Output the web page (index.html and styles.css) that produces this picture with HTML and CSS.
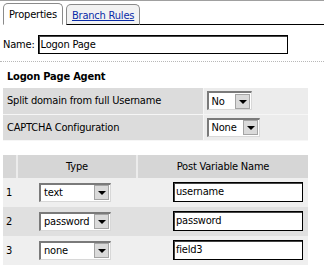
FILE: index.html
```html
<!DOCTYPE html>
<html lang="en">
<head>
    <meta charset="UTF-8">
    <title>Logon Page Properties</title>
    <link rel="stylesheet" href="styles.css">
</head>
<body>

    <div class="tab-bar">
        <div class="tab active">Properties</div>
        <div class="tab"><a href="#">Branch Rules</a></div>
        <div class="tab-fill"></div>
    </div>

    <div class="name-row">
        <label>Name:</label>
        <div class="text-box wide">Logon Page</div>
    </div>

    <div class="section-title">Logon Page Agent</div>

    <table class="agent-props">
        <tr>
            <td class="prop-label">Split domain from full Username</td>
            <td class="prop-value">
                <div class="combo short"><span class="combo-text">No</span><span class="combo-btn"></span></div>
            </td>
        </tr>
        <tr>
            <td class="prop-label">CAPTCHA Configuration</td>
            <td class="prop-value">
                <div class="combo mid"><span class="combo-text">None</span><span class="combo-btn"></span></div>
            </td>
        </tr>
    </table>

    <table class="fields">
        <tr class="head">
            <th class="num"></th>
            <th>Type</th>
            <th>Post Variable Name</th>
        </tr>
        <tr class="light">
            <td class="num">1</td>
            <td class="type-cell">
                <div class="combo long"><span class="combo-text">text</span><span class="combo-btn"></span></div>
            </td>
            <td class="var-cell"><div class="text-box var">username</div></td>
        </tr>
        <tr class="dark">
            <td class="num">2</td>
            <td class="type-cell">
                <div class="combo long"><span class="combo-text">password</span><span class="combo-btn"></span></div>
            </td>
            <td class="var-cell"><div class="text-box var">password</div></td>
        </tr>
        <tr class="light">
            <td class="num">3</td>
            <td class="type-cell">
                <div class="combo long"><span class="combo-text">none</span><span class="combo-btn"></span></div>
            </td>
            <td class="var-cell"><div class="text-box var">field3</div></td>
        </tr>
    </table>

</body>
</html>
```

FILE: styles.css
```css
/* Basic reset */
* {
    margin: 0;
    padding: 0;
    box-sizing: border-box;
}

body {
    width: 324px;
    height: 268px;
    overflow: hidden;
    font-family: 'DejaVu Sans Condensed', 'DejaVu Sans', sans-serif;
    font-size: 11px;
    letter-spacing: -0.2px;
    color: #000;
    background: #fff;
    border-top: 1px solid #a0a0a0;
}

/* Tabs */
.tab-bar {
    display: flex;
    align-items: flex-end;
    height: 24px;
    padding-left: 3px;
}

.tab {
    height: 21px;
    padding: 4px 5px 0 5px;
    border: 1px solid #8a8a8a;
    border-radius: 5px 5px 0 0;
    background: #f2f2f2;
    margin-right: 3px;
    border-bottom: 1px solid #000;
}

.tab.active {
    background: #fff;
    border-bottom: 1px solid #fff;
    height: 22px;
}

.tab a {
    color: #0a2ca8;
}

.tab-fill {
    flex-grow: 1;
    border-bottom: 1px solid #000;
    margin-left: -3px;
}

/* Name row */
.name-row {
    display: flex;
    align-items: center;
    gap: 3px;
    margin-top: 10px;
    padding-left: 3px;
    padding-bottom: 7px;
    border-bottom: 1px dotted #b8b8b8;
}

.text-box {
    height: 19px;
    border: 1px solid #000;
    box-shadow: inset 1px 1px 0 #444;
    padding: 2px 2px;
    background: #fff;
    line-height: 14px;
}

.text-box.wide {
    width: 250px;
}

/* Section */
.section-title {
    font-weight: bold;
    padding: 8px 0 0 7px;
    height: 26px;
}

table {
    border-collapse: collapse;
    margin-left: 3px;
    width: 305px;
}

.agent-props td {
    height: 26px;
    border-bottom: 1px solid #f6f6f6;
}

.prop-label {
    width: 200px;
    padding-left: 4px;
    background: #dcdcdc;
    border-right: 1px solid #f6f6f6;
}

.prop-value {
    background: #ececec;
    padding-left: 3px;
}

/* Combo boxes */
.combo {
    display: flex;
    align-items: center;
    justify-content: space-between;
    height: 19px;
    background: #fff;
    border-top: 2px solid #7a7a7a;
    border-left: 2px solid #7a7a7a;
    border-right: 1px solid #d8d8d8;
    border-bottom: 1px solid #d8d8d8;
    padding-left: 3px;
}

.combo.short { width: 45px; }
.combo.mid { width: 53px; }
.combo.long { width: 72px; }

.combo-btn {
    width: 15px;
    height: 15px;
    margin-right: 1px;
    background: #dadada;
    border: 1px solid #a4a4a4;
    position: relative;
}

.combo-btn::after {
    content: "";
    position: absolute;
    left: 3px;
    top: 5px;
    border-left: 4px solid transparent;
    border-right: 4px solid transparent;
    border-top: 4px solid #000;
}

/* Fields table */
.fields {
    margin-top: 14px;
}

.fields th {
    height: 23px;
    font-weight: normal;
    background: #d6d6d6;
    border-right: 2px solid #ececec;
}

.fields th:last-child,
.fields td:last-child {
    border-right: none;
}

.fields td {
    border-right: 2px solid transparent;
}

.fields .num {
    width: 14px;
    padding-left: 3px;
    text-align: left;
}

.fields tr.light td { background: #efefef; height: 29px; }
.fields tr.dark td { background: #e0e0e0; height: 29px; }

.type-cell {
    width: 120px;
    padding-left: 21px;
}

.var-cell {
    padding-left: 35px;
}

.text-box.var {
    width: 130px;
    height: 20px;
}
```
